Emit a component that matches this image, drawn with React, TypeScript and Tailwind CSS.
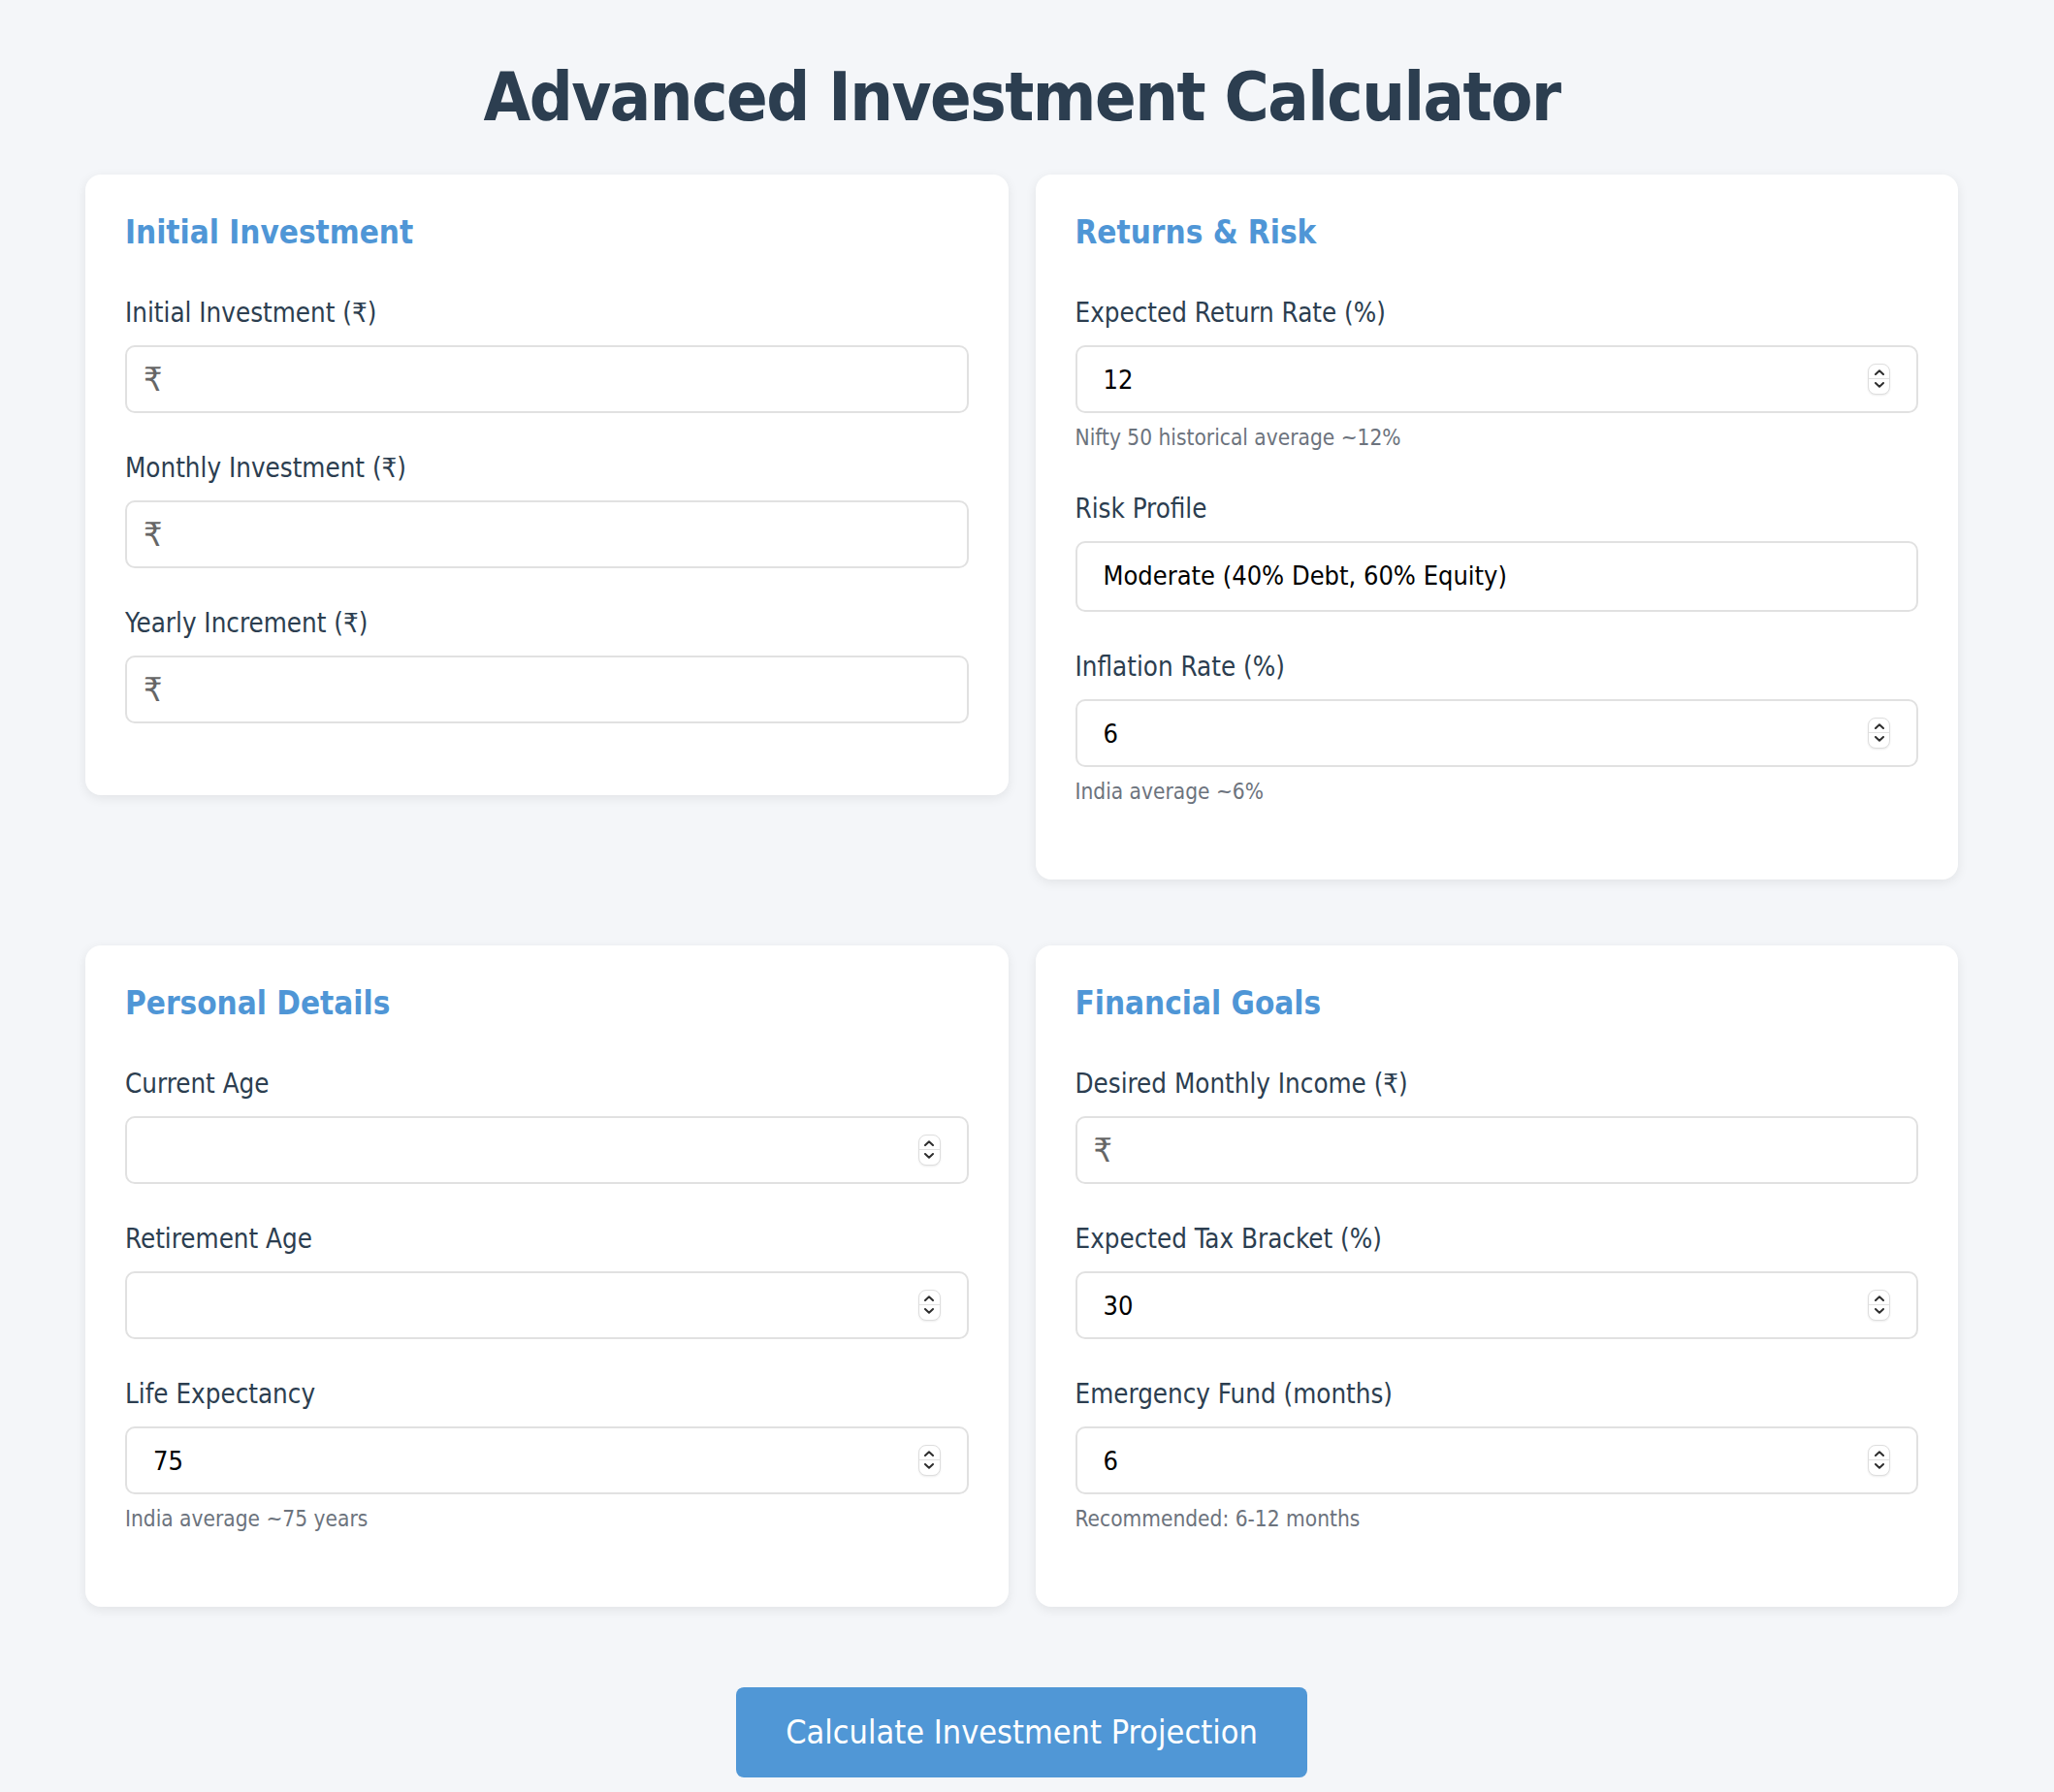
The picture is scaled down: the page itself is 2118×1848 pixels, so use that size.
import React from 'react';

const font = "font-['DejaVu_Sans_Condensed','DejaVu_Sans',sans-serif]";

function Spinner() {
  return (
    <span className="pointer-events-none absolute right-[29px] top-1/2 flex h-[32px] w-[23px] -translate-y-1/2 flex-col items-center justify-center overflow-hidden rounded-[8px] border border-[#dedede] bg-white shadow-[0_1px_2px_rgba(0,0,0,0.08)]">
      <span className="flex h-1/2 w-full items-end justify-center border-b border-[#e2e2e2] pb-[3px]">
        <svg width="10" height="6" viewBox="0 0 10 6" fill="none">
          <path d="M1 5 L5 1.2 L9 5" stroke="#2e2e2e" strokeWidth="2" strokeLinecap="round" strokeLinejoin="round" />
        </svg>
      </span>
      <span className="flex h-1/2 w-full items-start justify-center pt-[3px]">
        <svg width="10" height="6" viewBox="0 0 10 6" fill="none">
          <path d="M1 1 L5 4.8 L9 1" stroke="#2e2e2e" strokeWidth="2" strokeLinecap="round" strokeLinejoin="round" />
        </svg>
      </span>
    </span>
  );
}

const inputBox =
  'block h-[70px] w-full rounded-[10px] border-2 border-[#e1e1e1] bg-white pl-[27px] pr-[70px] text-[27px] text-black outline-none';

function MoneyInput() {
  return (
    <div className="relative">
      <span className="absolute left-[19px] top-1/2 -translate-y-1/2 text-[34px] leading-none text-[#666666]">
        ₹
      </span>
      <input type="text" className={`${inputBox} pl-[48px]`} />
    </div>
  );
}

function NumberInput({ value }: { value?: string }) {
  return (
    <div className="relative">
      <input type="text" inputMode="numeric" defaultValue={value} className={inputBox} />
      <Spinner />
    </div>
  );
}

function Field({ label, helper, children }: { label: string; helper?: string; children: React.ReactNode }) {
  return (
    <div className="mb-[40px]">
      <label className="mb-[17px] block text-[27.5px] leading-[33px] text-[#2c3e50]">{label}</label>
      {children}
      {helper && <p className="mt-[11px] pb-[3px] text-[22.5px] leading-[28px] text-[#6c737d]">{helper}</p>}
    </div>
  );
}

function Card({ title, children }: { title: string; children: React.ReactNode }) {
  return (
    <div className="mb-[41px] rounded-[16px] bg-white px-[41px] pt-[40px] pb-[34px] shadow-[0_3px_12px_rgba(0,0,0,0.08)]">
      <h2 className="mb-[46px] text-[33px] font-bold leading-[40px] text-[#4f96d6]">{title}</h2>
      {children}
    </div>
  );
}

export default function App(): JSX.Element {
  return (
    <div className={`${font} h-[1848px] overflow-hidden bg-[#f4f6f9] pl-[88px] pr-[99px] pt-[58px]`}>
      <h1 className="mb-[37px] text-center text-[70px] font-bold leading-[85px] tracking-[-1.5px] text-[#2c3e50]">
        Advanced Investment Calculator
      </h1>

      <div className="grid grid-cols-2 items-start gap-x-[28px] gap-y-[27px]">
        <Card title="Initial Investment">
          <Field label="Initial Investment (₹)">
            <MoneyInput />
          </Field>
          <Field label="Monthly Investment (₹)">
            <MoneyInput />
          </Field>
          <Field label="Yearly Increment (₹)">
            <MoneyInput />
          </Field>
        </Card>

        <Card title="Returns & Risk">
          <Field label="Expected Return Rate (%)" helper="Nifty 50 historical average ~12%">
            <NumberInput value="12" />
          </Field>
          <Field label="Risk Profile">
            <select
              defaultValue="moderate"
              className="block h-[73px] w-full appearance-none rounded-[10px] border-2 border-[#e1e1e1] bg-white pl-[27px] text-[27px] text-black outline-none"
            >
              <option value="conservative">Conservative (70% Debt, 30% Equity)</option>
              <option value="moderate">Moderate (40% Debt, 60% Equity)</option>
              <option value="aggressive">Aggressive (20% Debt, 80% Equity)</option>
            </select>
          </Field>
          <Field label="Inflation Rate (%)" helper="India average ~6%">
            <NumberInput value="6" />
          </Field>
        </Card>

        <Card title="Personal Details">
          <Field label="Current Age">
            <NumberInput />
          </Field>
          <Field label="Retirement Age">
            <NumberInput />
          </Field>
          <Field label="Life Expectancy" helper="India average ~75 years">
            <NumberInput value="75" />
          </Field>
        </Card>

        <Card title="Financial Goals">
          <Field label="Desired Monthly Income (₹)">
            <MoneyInput />
          </Field>
          <Field label="Expected Tax Bracket (%)">
            <NumberInput value="30" />
          </Field>
          <Field label="Emergency Fund (months)" helper="Recommended: 6-12 months">
            <NumberInput value="6" />
          </Field>
        </Card>
      </div>

      <div className="mt-[42px] flex justify-center">
        <button
          type="button"
          className="h-[93px] rounded-[8px] bg-[#5097d6] px-[51px] text-[34px] text-white"
        >
          Calculate Investment Projection
        </button>
      </div>
    </div>
  );
}
